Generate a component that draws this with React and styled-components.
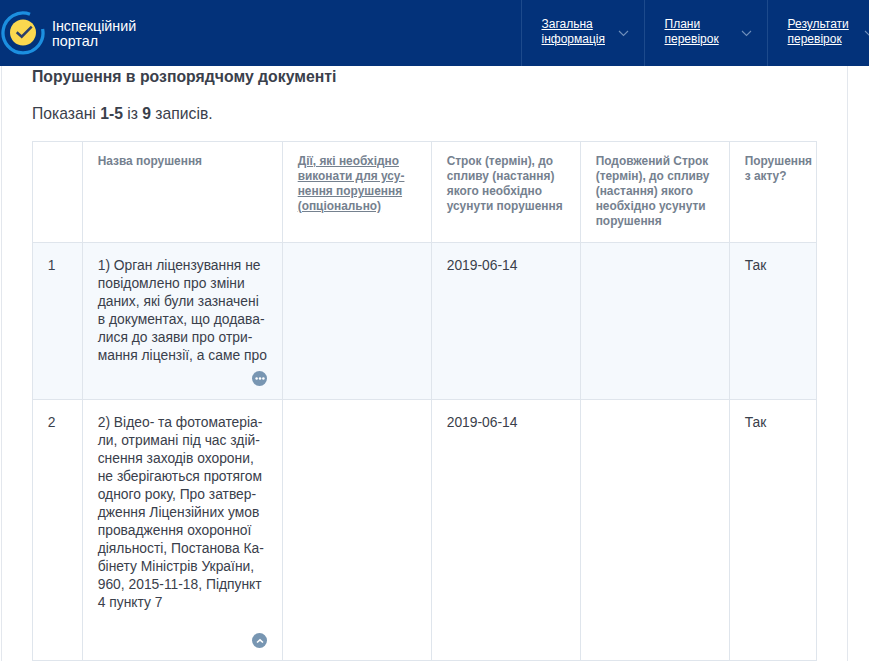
import React from "react";
import styled, { createGlobalStyle } from "styled-components";

const Global = createGlobalStyle`
  html, body { margin: 0; padding: 0; height: 100%; overflow: hidden; background: #fff; }
  body { font-family: "Liberation Sans", Arial, sans-serif; color: #3a404b; }
`;
const Header = styled.header`
  height: 66px; background: #03327a; display: flex; justify-content: space-between;
  position: relative; z-index: 1; overflow: hidden;
`;
const Brand = styled.div`
  display: flex; align-items: center; gap: 5px; padding-left: 1px;
`;
const BrandText = styled.div`
  color: #fff; font-size: 14.3px; line-height: 15px; margin-top: 1px;
`;
const Nav = styled.nav`
  display: flex; width: 348px; flex: none;
`;
const NavItem = styled.div`
  width: 123px; flex: none; box-sizing: border-box; border-left: 1px solid #1d4a8c;
  display: flex; align-items: center; padding-left: 19.5px; position: relative;
`;
const NavLink = styled.a`
  color: #fff; font-size: 12px; line-height: 15px; text-decoration: underline;
  width: 76.5px; flex: none; margin-top: -3px;
`;
const Main = styled.main`
  margin-left: 1px; width: 847px; height: 595px; box-sizing: border-box;
  border-left: 1px solid #e3e7ed; border-right: 1px solid #e3e7ed;
  padding: 2px 0 0 30px; overflow: hidden;
`;
const Title = styled.h2`
  margin: 0; font-size: 15.8px; line-height: 18px; font-weight: 700; color: #3a404b;
`;
const Summary = styled.p`
  margin: 19px 0 0; font-size: 15.7px; line-height: 18px; color: #3a404b;
  b { font-weight: 700; }
`;
const Table = styled.div`
  margin-top: 18px; width: 785px; display: grid;
  grid-template-columns: 50px 200px 149px 149px 149px 87px;
  grid-template-rows: 101px 157px 261px;
  border-left: 1px solid #dfe5ec; border-top: 1px solid #dfe5ec; box-sizing: border-box;
`;
const Cell = styled.div`
  position: relative; box-sizing: border-box; padding: 13px 4px 0 14.7px;
  border-right: 1px solid #dfe5ec; border-bottom: 1px solid #dfe5ec;
  font-size: 13.85px; line-height: 18px; color: #3a404b;
  background: ${p => (p.$tint ? "#f5f9fd" : "#fff")};
`;
const HeadCell = styled(Cell)`
  padding-top: 12px; font-size: 11.9px; line-height: 15px; font-weight: 700; color: #75818f;
`;
const HeadLink = styled.a`
  color: #75818f; text-decoration: underline;
`;
const Line = styled.span`
  display: block; white-space: nowrap;
`;
const RoundBtn = styled.span`
  position: absolute; right: 15px; bottom: ${p => p.$bottom}px; width: 15px; height: 15px;
  border-radius: 50%; background: #7896b2; display: flex; align-items: center; justify-content: center;
`;
const Lines = ({ items }) => items.map((t, i) => <Line key={i}>{t}</Line>);

const Logo = () => (
  <svg width="46" height="46" viewBox="0 0 46 46" style={{ marginTop: 1 }}>
    <path d="M29 3.2 A20 20 0 1 0 41.6 18" fill="none" stroke="#1c8fe0" strokeWidth="3.3" />
    <circle cx="22" cy="21.5" r="13" fill="#fbd84f" />
    <path d="M15.7 21.3 L20.7 25.7 L30.7 15.7" fill="none" stroke="#2a3f6b" strokeWidth="2.5" />
  </svg>
);
const Chevron = () => (
  <svg width="11" height="7" viewBox="0 0 11 7" style={{ flex: "none" }}>
    <path d="M1 1 L5.5 5.5 L10 1" fill="none" stroke="#6f8fbb" strokeWidth="1.1" />
  </svg>
);
const Dots = () => (
  <svg width="10" height="3" viewBox="0 0 10 3"><circle cx="1.6" cy="1.5" r="1.25" fill="#fff" /><circle cx="5" cy="1.5" r="1.25" fill="#fff" /><circle cx="8.4" cy="1.5" r="1.25" fill="#fff" /></svg>
);
const Up = () => (
  <svg width="8" height="6" viewBox="0 0 8 6"><path d="M1 4.5 L4 1.8 L7 4.5" fill="none" stroke="#fff" strokeWidth="1.6" /></svg>
);

export default function App() {
  return (
    <>
      <Global />
      <Header>
        <Brand>
          <Logo />
          <BrandText><Line>Інспекційний</Line><Line>портал</Line></BrandText>
        </Brand>
        <Nav>
          <NavItem><NavLink><Line>Загальна</Line><Line>інформація</Line></NavLink><Chevron /></NavItem>
          <NavItem><NavLink><Line>Плани</Line><Line>перевірок</Line></NavLink><Chevron /></NavItem>
          <NavItem><NavLink><Line>Результати</Line><Line>перевірок</Line></NavLink><Chevron /></NavItem>
        </Nav>
      </Header>
      <Main>
        <Title>Порушення в розпорядчому документі</Title>
        <Summary>Показані <b>1-5</b> із <b>9</b> записів.</Summary>
        <Table>
          <HeadCell />
          <HeadCell>Назва порушення</HeadCell>
          <HeadCell><HeadLink><Lines items={["Дії, які необхідно", "виконати для усу-", "нення порушення", "(опціонально)"]} /></HeadLink></HeadCell>
          <HeadCell><Lines items={["Строк (термін), до", "спливу (настання)", "якого необхідно", "усунути порушення"]} /></HeadCell>
          <HeadCell><Lines items={["Подовжений Строк", "(термін), до спливу", "(настання) якого", "необхідно усунути", "порушення"]} /></HeadCell>
          <HeadCell><Lines items={["Порушення", "з акту?"]} /></HeadCell>

          <Cell $tint>1</Cell>
          <Cell $tint>
            <Lines items={["1) Орган ліцензування не", "повідомлено про зміни", "даних, які були зазначені", "в документах, що додава-", "лися до заяви про отри-", "мання ліцензії, а саме про"]} />
            <RoundBtn $bottom={13}><Dots /></RoundBtn>
          </Cell>
          <Cell $tint />
          <Cell $tint>2019-06-14</Cell>
          <Cell $tint />
          <Cell $tint>Так</Cell>

          <Cell>2</Cell>
          <Cell>
            <Lines items={["2) Відео- та фотоматеріа-", "ли, отримані під час здій-", "снення заходів охорони,", "не зберігаються протягом", "одного року, Про затвер-", "дження Ліцензійних умов", "провадження охоронної", "діяльності, Постанова Ка-", "бінету Міністрів України,", "960, 2015-11-18, Підпункт", "4 пункту 7"]} />
            <RoundBtn $bottom={12}><Up /></RoundBtn>
          </Cell>
          <Cell />
          <Cell>2019-06-14</Cell>
          <Cell />
          <Cell>Так</Cell>
        </Table>
      </Main>
    </>
  );
}
